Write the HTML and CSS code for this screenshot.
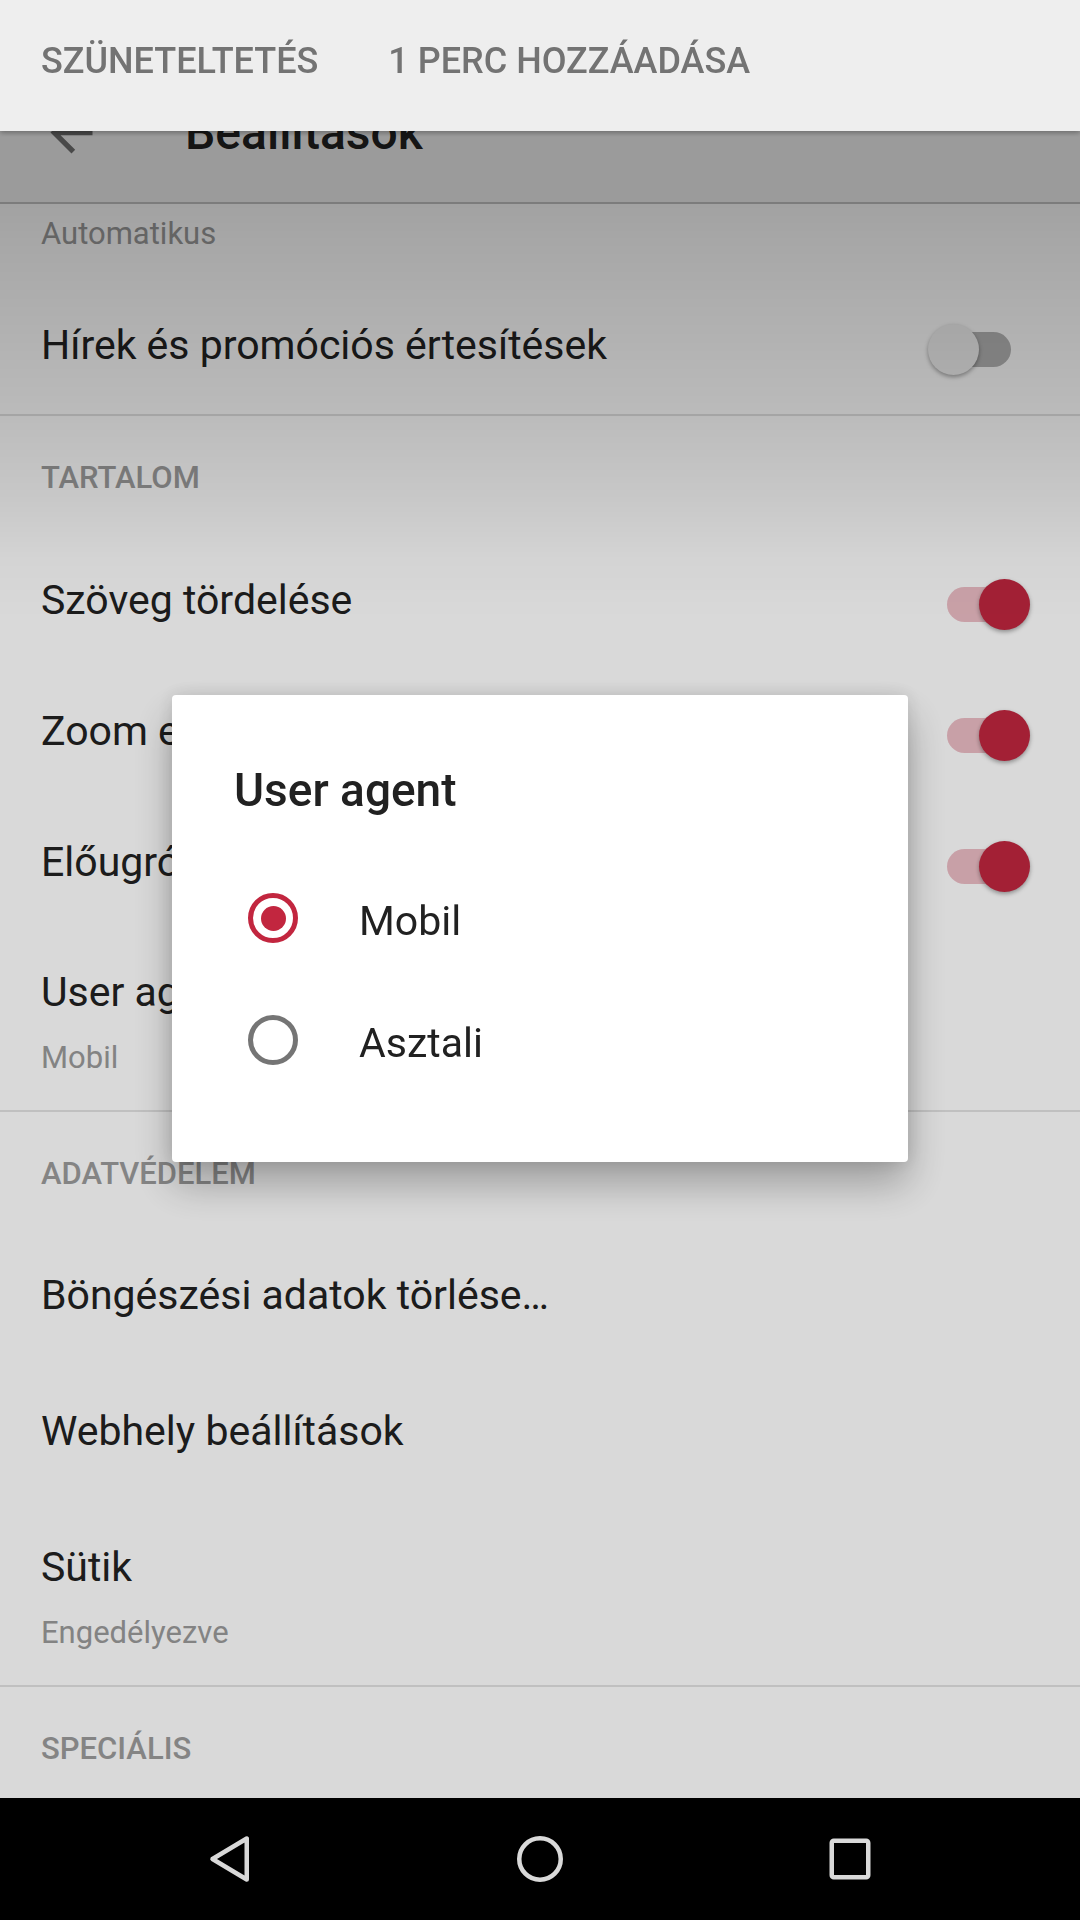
FILE: index.html
```html
<!DOCTYPE html>
<html lang="hu">
<head>
    <meta charset="UTF-8">
    <meta name="viewport" content="width=device-width, initial-scale=1.0">
    <title>Beállítások</title>
    <link rel="stylesheet" href="styles.css">
</head>
<body>
    <!-- felső értesítés -->
    <div class="heads-up">
        <span class="heads-up-action">SZÜNETELTETÉS</span>
        <span class="heads-up-action">1 PERC HOZZÁADÁSA</span>
    </div>

    <div class="status-space"></div>

    <!-- eszköztár -->
    <div class="toolbar">
        <svg class="back-icon" viewBox="0 0 24 24" width="63" height="63">
            <path d="M20 11H7.83l5.59-5.59L12 4l-8 8 8 8 1.41-1.41L7.83 13H20v-2z"/>
        </svg>
        <div class="toolbar-title">Beállítások</div>
    </div>

    <!-- beállítások lista -->
    <div class="list">
        <div class="list-inner">
            <div class="pref pref-two first">
                <div class="pref-text">
                    <div class="title">Képek betöltése</div>
                    <div class="summary">Automatikus</div>
                </div>
            </div>
            <div class="pref pref-switch group-end">
                <div class="title">Hírek és promóciós értesítések</div>
                <div class="switch"><div class="track"></div><div class="thumb"></div></div>
            </div>
            <div class="divider"></div>

            <div class="category">TARTALOM</div>
            <div class="pref pref-switch">
                <div class="title">Szöveg tördelése</div>
                <div class="switch on"><div class="track"></div><div class="thumb"></div></div>
            </div>
            <div class="pref pref-switch">
                <div class="title">Zoom engedélyezése</div>
                <div class="switch on"><div class="track"></div><div class="thumb"></div></div>
            </div>
            <div class="pref pref-switch">
                <div class="title">Előugró ablakok tiltása</div>
                <div class="switch on"><div class="track"></div><div class="thumb"></div></div>
            </div>
            <div class="pref pref-two">
                <div class="pref-text">
                    <div class="title">User agent</div>
                    <div class="summary">Mobil</div>
                </div>
            </div>
            <div class="divider"></div>

            <div class="category">ADATVÉDELEM</div>
            <div class="pref pref-plain">
                <div class="title">Böngészési adatok törlése…</div>
            </div>
            <div class="pref pref-plain">
                <div class="title">Webhely beállítások</div>
            </div>
            <div class="pref pref-two">
                <div class="pref-text">
                    <div class="title">Sütik</div>
                    <div class="summary">Engedélyezve</div>
                </div>
            </div>
            <div class="divider"></div>

            <div class="category">SPECIÁLIS</div>
        </div>
    </div>

    <!-- navigációs sáv -->
    <div class="navbar">
        <div class="nav-btn">
            <svg viewBox="0 0 60 60" width="60" height="60">
                <path d="M12.5 30 L46.75 9.5 L46.75 50.5 Z"/>
            </svg>
        </div>
        <div class="nav-btn">
            <svg viewBox="0 0 60 60" width="60" height="60">
                <circle cx="30" cy="30" r="20.75"/>
            </svg>
        </div>
        <div class="nav-btn">
            <svg viewBox="0 0 60 60" width="60" height="60">
                <rect x="11.75" y="11.75" width="36.5" height="36.5" rx="2"/>
            </svg>
        </div>
    </div>

    <!-- sötétítés a párbeszédablak mögött -->
    <div class="scrim"></div>

    <!-- párbeszédablak -->
    <div class="dialog">
        <div class="dialog-title">User agent</div>
        <div class="option">
            <div class="radio checked"></div>
            <div class="option-label">Mobil</div>
        </div>
        <div class="option">
            <div class="radio"></div>
            <div class="option-label">Asztali</div>
        </div>
    </div>
</body>
</html>
```

FILE: styles.css
```css
/* alap */
* {
    box-sizing: border-box;
}

html, body {
    margin: 0;
    padding: 0;
}

body {
    width: 1080px;
    height: 1920px;
    overflow: hidden;
    display: flex;
    flex-direction: column;
    background: #fff;
    color: #212121;
    font-family: Roboto, "Noto Sans", sans-serif;
}

/* felső értesítés */
.heads-up {
    position: fixed;
    top: 0;
    left: 0;
    right: 0;
    height: 131px;
    z-index: 3;
    display: flex;
    gap: 70px;
    padding: 41px 0 0 41px;
    background: #eeeeee;
    box-shadow: 0 2px 5px rgba(0, 0, 0, 0.3);
    color: #737373;
    font-size: 36px;
    font-weight: 500;
    line-height: 40px;
}

.status-space {
    height: 63px;
    flex-shrink: 0;
    background: #f5f5f5;
}

/* eszköztár */
.toolbar {
    height: 141px;
    flex-shrink: 0;
    display: flex;
    align-items: center;
    background: #f5f5f5;
    border-bottom: 2px solid #c3c3c3;
}

.back-icon {
    margin-left: 40px;
    fill: #737373;
}

.toolbar-title {
    margin-left: 82px;
    font-size: 48px;
    font-weight: 500;
}

/* lista */
.list {
    flex: 1;
    overflow: hidden;
}

.list-inner {
    margin-top: -101px;
}

.pref {
    display: flex;
    justify-content: space-between;
    padding: 0 50px 0 41px;
}

.pref-switch {
    height: 131px;
    align-items: center;
}

.pref-switch.group-end {
    margin-bottom: 4px;
}

.pref-plain {
    min-height: 136px;
    padding-top: 37px;
    align-items: flex-start;
}

.pref-two {
    padding-top: 37px;
    padding-bottom: 32px;
    align-items: flex-start;
}

.pref-two.first {
    padding-bottom: 25px;
}

.title {
    font-size: 41px;
    line-height: 56px;
    white-space: nowrap;
}

.summary {
    margin-top: 18px;
    font-size: 31px;
    line-height: 40px;
    color: #9a9a9a;
}

.divider {
    height: 2px;
    background: #e2e2e2;
}

.category {
    height: 118px;
    padding: 42px 41px 0;
    font-size: 31px;
    font-weight: 500;
    line-height: 40px;
    color: #9c9c9c;
}

/* kapcsoló */
.switch {
    position: relative;
    width: 102px;
    height: 51px;
    margin-top: 10px;
    flex-shrink: 0;
}

.switch .track {
    position: absolute;
    left: 19px;
    top: 8px;
    width: 64px;
    height: 35px;
    border-radius: 18px;
    background: rgba(0, 0, 0, 0.29);
}

.switch .thumb {
    position: absolute;
    left: 0;
    top: 0;
    width: 51px;
    height: 51px;
    border-radius: 50%;
    background: #f1f1f1;
    box-shadow: 0 2px 4px rgba(0, 0, 0, 0.35);
}

.switch.on .track {
    background: rgba(192, 38, 63, 0.3);
}

.switch.on .thumb {
    left: 51px;
    background: #c0263f;
}

/* navigációs sáv */
.navbar {
    height: 122px;
    flex-shrink: 0;
    display: flex;
    justify-content: center;
    align-items: center;
    background: #000;
}

.nav-btn {
    width: 310px;
    display: flex;
    justify-content: center;
}

.nav-btn svg {
    fill: none;
    stroke: #fff;
    stroke-width: 4.5;
    stroke-linejoin: round;
}

/* sötétítés */
.scrim {
    position: fixed;
    inset: 0;
    z-index: 1;
    background: linear-gradient(to bottom,
        rgba(0, 0, 0, 0.365) 0,
        rgba(0, 0, 0, 0.365) 204px,
        rgba(0, 0, 0, 0.34) 250px,
        rgba(0, 0, 0, 0.275) 400px,
        rgba(0, 0, 0, 0.215) 500px,
        rgba(0, 0, 0, 0.17) 560px,
        rgba(0, 0, 0, 0.15) 620px,
        rgba(0, 0, 0, 0.15) 100%);
}

/* párbeszédablak */
.dialog {
    position: fixed;
    left: 172px;
    top: 695px;
    width: 736px;
    height: 467px;
    z-index: 2;
    padding: 67px 62px 61px;
    background: #fff;
    border-radius: 4px;
    box-shadow: 0 22px 40px rgba(0, 0, 0, 0.28), 0 0 18px rgba(0, 0, 0, 0.12);
}

.dialog-title {
    margin-bottom: 39px;
    font-size: 46px;
    font-weight: 500;
    line-height: 56px;
}

.option {
    height: 122px;
    display: flex;
    align-items: center;
    padding-left: 14px;
}

.radio {
    width: 50px;
    height: 50px;
    flex-shrink: 0;
    display: flex;
    align-items: center;
    justify-content: center;
    border: 5px solid #757575;
    border-radius: 50%;
}

.radio.checked {
    border-color: #c2263f;
}

.radio.checked::after {
    content: "";
    width: 25px;
    height: 25px;
    border-radius: 50%;
    background: #c2263f;
}

.option-label {
    margin: 6px 0 0 61px;
    font-size: 41px;
    line-height: 56px;
}
```
